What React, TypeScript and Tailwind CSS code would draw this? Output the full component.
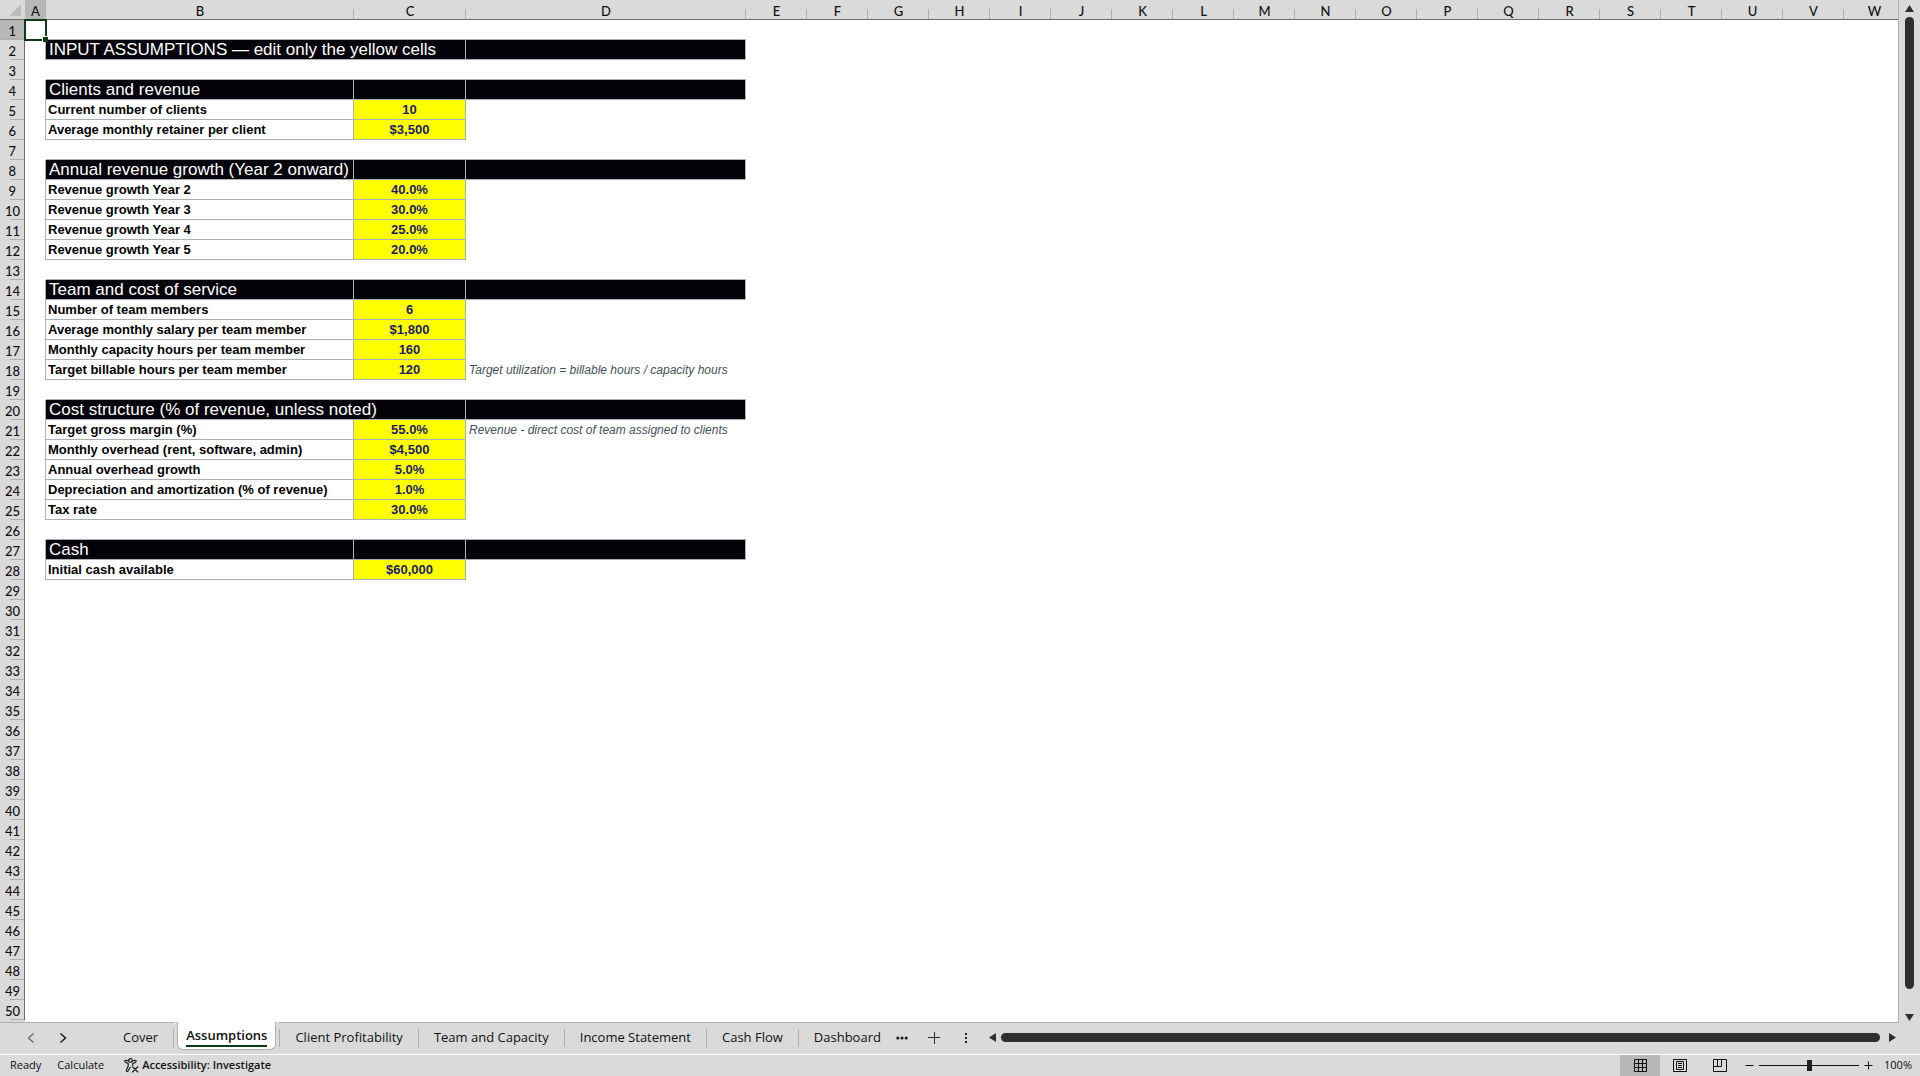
import type { ReactNode } from "react";

type Row = {
  kind: "title" | "input";
  label: string;
  value?: string;
  note?: string;
  // long titles run over the empty cell on their right
  spill?: boolean;
};

const SHEET: Record<number, Row> = {
  2: { kind: "title", label: "INPUT ASSUMPTIONS — edit only the yellow cells", spill: true },
  4: { kind: "title", label: "Clients and revenue" },
  5: { kind: "input", label: "Current number of clients", value: "10" },
  6: { kind: "input", label: "Average monthly retainer per client", value: "$3,500" },
  8: { kind: "title", label: "Annual revenue growth (Year 2 onward)" },
  9: { kind: "input", label: "Revenue growth Year 2", value: "40.0%" },
  10: { kind: "input", label: "Revenue growth Year 3", value: "30.0%" },
  11: { kind: "input", label: "Revenue growth Year 4", value: "25.0%" },
  12: { kind: "input", label: "Revenue growth Year 5", value: "20.0%" },
  14: { kind: "title", label: "Team and cost of service" },
  15: { kind: "input", label: "Number of team members", value: "6" },
  16: { kind: "input", label: "Average monthly salary per team member", value: "$1,800" },
  17: { kind: "input", label: "Monthly capacity hours per team member", value: "160" },
  18: {
    kind: "input",
    label: "Target billable hours per team member",
    value: "120",
    note: "Target utilization = billable hours / capacity hours",
  },
  20: { kind: "title", label: "Cost structure (% of revenue, unless noted)", spill: true },
  21: {
    kind: "input",
    label: "Target gross margin (%)",
    value: "55.0%",
    note: "Revenue - direct cost of team assigned to clients",
  },
  22: { kind: "input", label: "Monthly overhead (rent, software, admin)", value: "$4,500" },
  23: { kind: "input", label: "Annual overhead growth", value: "5.0%" },
  24: { kind: "input", label: "Depreciation and amortization (% of revenue)", value: "1.0%" },
  25: { kind: "input", label: "Tax rate", value: "30.0%" },
  27: { kind: "title", label: "Cash" },
  28: { kind: "input", label: "Initial cash available", value: "$60,000" },
};

const ROW_COUNT = 50;
const COLUMNS = "ABCDEFGHIJKLMNOPQRSTUVW".split("");
const TABS = [
  "Cover",
  "Assumptions",
  "Client Profitability",
  "Team and Capacity",
  "Income Statement",
  "Cash Flow",
  "Dashboard",
];
const ACTIVE_TAB = "Assumptions";

function columnWidth(name: string) {
  if (name === "A") return "w-[21px]";
  if (name === "B") return "w-[308px]";
  if (name === "C") return "w-[112px]";
  if (name === "D") return "w-[280px]";
  return "w-[61px]";
}

function ColumnHeaders() {
  return (
    <thead>
      <tr className="h-5">
        <th className="border-b border-[#6b6b6b] p-0">
          <svg className="ml-[9px] h-3 w-3" viewBox="0 0 12 12" aria-hidden="true">
            <path d="M12 0V12H0Z" fill="#bcbcbc" />
          </svg>
        </th>
        {COLUMNS.map((name) => (
          <th
            key={name}
            scope="col"
            className={`relative border-b border-[#6b6b6b] px-0 pt-[2px] pb-0 font-[Lato,sans-serif] text-[13px] leading-4 font-medium after:absolute after:right-0 after:bottom-0 after:w-px after:bg-[#b0b0b0] ${
              name === "A" ? "bg-[#b7b7b7] after:h-5" : "after:h-[10px]"
            }`}
          >
            {name}
          </th>
        ))}
      </tr>
    </thead>
  );
}

function SheetRow({ index }: { index: number }) {
  const row = SHEET[index];
  const next = SHEET[index + 1];
  const line = "border-[#a9b0b4]";

  let cells: ReactNode;
  if (row?.kind === "title") {
    const bar = `border-r border-b ${line} bg-[#030208]`;
    cells = (
      <>
        <td className={`border-r ${line} p-0`} />
        <td
          colSpan={row.spill ? 2 : 1}
          className={`${bar} py-0 pr-0 pl-[3px] text-[17px] leading-[18px] whitespace-nowrap text-white`}
        >
          {row.label}
        </td>
        {row.spill ? null : <td className={`${bar} p-0`} />}
        <td className={`${bar} p-0`} />
      </>
    );
  } else if (row) {
    cells = (
      <>
        <td className={`border-r ${line} p-0`} />
        <td
          className={`border-r border-b ${line} py-0 pr-0 pl-[2px] text-[13px] leading-[18px] font-bold whitespace-nowrap text-black`}
        >
          {row.label}
        </td>
        <td
          className={`border-r border-b ${line} bg-[#ffff00] px-0 pt-px pb-0 text-center text-[13px] leading-[18px] font-bold text-[#1c1c6c]`}
        >
          {row.value}
        </td>
        <td className="py-0 pr-0 pl-[3px] text-xs leading-[18px] whitespace-nowrap text-[#44505a] italic">
          {row.note}
        </td>
      </>
    );
  } else {
    const edge = next?.kind === "title" ? `border-b ${line}` : "";
    cells = (
      <>
        <td className="relative p-0">
          {index === 1 ? (
            <span className="absolute -inset-px z-10 border-2 border-[#0e3a17]">
              <span className="absolute -right-[3px] -bottom-[3px] h-[6px] w-[6px] border-t border-l border-white bg-[#0e3a17]" />
            </span>
          ) : null}
        </td>
        <td className={`${edge} p-0`} />
        <td className={`${edge} p-0`} />
        <td className={`${edge} p-0`} />
      </>
    );
  }

  return (
    <tr className="h-5">
      <th
        scope="row"
        className={`relative border-r border-[#6b6b6b] pt-[2px] pb-0 pl-0 text-right font-[Lato,sans-serif] text-[13px] leading-[18px] font-medium after:absolute after:right-0 after:bottom-0 after:h-px after:bg-[#b0b0b0] ${
          index === 1 ? "bg-[#b7b7b7] after:w-full" : "bg-[#dadada] after:w-[14px]"
        } ${index < 10 ? "pr-2" : "pr-1"}`}
      >
        {index}
      </th>
      {cells}
      <td colSpan={19} className="p-0" />
    </tr>
  );
}

function Triangle({ d, label }: { d: string; label: string }) {
  return (
    <button type="button" aria-label={label} className="shrink-0">
      <svg className="h-[9px] w-[9px]" viewBox="0 0 9 9">
        <path d={d} fill="#2f2f2f" />
      </svg>
    </button>
  );
}

function SheetTabs() {
  return (
    <div className="flex h-8 shrink-0 items-start">
      <div className="flex h-8 w-[108px] shrink-0 items-center gap-5 border-t border-[#b0b0b0] pb-[2px] pl-[25px]">
        <button type="button" aria-label="Previous sheet">
          <svg className="h-3 w-3" viewBox="0 0 12 12" fill="none" stroke="#6a6a6a" strokeWidth="1.3">
            <path d="M8.5 1.5L3.5 6L8.5 10.5" />
          </svg>
        </button>
        <button type="button" aria-label="Next sheet">
          <svg className="h-3 w-3" viewBox="0 0 12 12" fill="none" stroke="#1f1f1f" strokeWidth="1.5">
            <path d="M3.5 1.5L8.5 6L3.5 10.5" />
          </svg>
        </button>
      </div>
      <nav className="flex text-[13px] whitespace-nowrap">
        {TABS.map((tab) =>
          tab === ACTIVE_TAB ? (
            <div key={tab} className="flex h-8 px-[3px]">
              <button
                type="button"
                className="h-7 rounded-b-md border-x border-b border-[#b0b0b0] bg-white px-2 pb-[2px] font-semibold"
              >
                <span className="block border-b-2 border-[#0e3a17] pt-[2px] leading-5">{tab}</span>
              </button>
            </div>
          ) : (
            <div key={tab} className="flex h-8 items-center border-t border-[#b0b0b0] pb-[2px]">
              {tab === "Client Profitability" ? <span className="h-[18px] w-px bg-[#b0b0b0]" /> : null}
              <button type="button" className="px-[15px]">
                {tab}
              </button>
              {tab === "Dashboard" ? null : <span className="h-[18px] w-px bg-[#b0b0b0]" />}
            </div>
          ),
        )}
      </nav>
      <div className="flex h-8 min-w-0 grow items-center border-t border-[#b0b0b0] pb-[2px]">
        <button type="button" aria-label="More sheets">
          <svg className="h-3 w-3" viewBox="0 0 12 12" fill="#1f1f1f">
            <circle cx="1.8" cy="6" r="1.6" />
            <circle cx="6" cy="6" r="1.6" />
            <circle cx="10.2" cy="6" r="1.6" />
          </svg>
        </button>
        <button type="button" aria-label="New sheet" className="ml-5">
          <svg className="h-3 w-3" viewBox="0 0 12 12" stroke="#2b2b2b" strokeWidth="1">
            <path d="M6.5 0V12M0 5.5H12" />
          </svg>
        </button>
        <span className="ml-5 flex w-3 flex-col items-center gap-[2px]">
          <i className="h-[2px] w-[2px] bg-[#1f1f1f]" />
          <i className="h-[2px] w-[2px] bg-[#1f1f1f]" />
          <i className="h-[2px] w-[2px] bg-[#1f1f1f]" />
        </span>
        <div className="ml-4 flex grow items-center gap-1">
          <Triangle label="Scroll left" d="M8 0V9L1 4.500Z" />
          <div className="h-[9px] grow rounded-full bg-[#2f2f2f]" />
        </div>
      </div>
      <div className="flex h-8 w-[40px] shrink-0">
        <span className="flex w-[19px] items-center border-t border-[#b0b0b0] pb-[2px] pl-2">
          <Triangle label="Scroll right" d="M1 0V9L8 4.500Z" />
        </span>
      </div>
    </div>
  );
}

function StatusBar() {
  return (
    <footer className="flex h-[22px] shrink-0 items-center border-t border-white text-[11px]">
      <span className="ml-[10px]">Ready</span>
      <span className="ml-4">Calculate</span>
      <button type="button" className="ml-5 flex items-center gap-[3px] font-semibold">
        <svg
          className="h-[15px] w-[15px]"
          viewBox="0 0 15 15"
          fill="none"
          stroke="#1f1f1f"
          strokeWidth="1.2"
          strokeLinecap="round"
          strokeLinejoin="round"
        >
          <circle cx="6.500" cy="2.500" r="1.800" />
          <path d="M4.700 3.200L2.200 2.300Q.8 2.200 .8 3.400Q.9 4.200 4.200 5.600V8L2.300 12.300Q2.200 13.900 3.700 13.500L6.300 9.300M8.300 3.200L10.800 2.300Q12.200 2.200 12.200 3.400Q12.100 4.200 8.800 5.600V7.300M8.500 8.800L13.800 14M13.800 8.800L8.500 14" />
        </svg>
        Accessibility: Investigate
      </button>
      <div className="ml-auto flex h-full items-center">
        <button type="button" aria-label="Normal view" className="flex h-full w-10 items-center justify-center bg-[#b7b7b7]">
          <svg className="h-[13px] w-[13px]" viewBox="0 0 13 13" fill="none" stroke="#111">
            <path d="M.5.5H12.500V12.500H.5ZM4.500.5V12.500M8.500.5V12.500M.5 4.500H12.500M.5 8.500H12.500" />
          </svg>
        </button>
        <button type="button" aria-label="Page layout" className="flex h-full w-10 items-center justify-center">
          <svg className="h-[13px] w-[14px]" viewBox="0 0 14 13" fill="none" stroke="#111">
            <path d="M.5.5H13.500V12.500H.5ZM3.500 2.500H10.500V10.500H3.500ZM5 4.500H9M5 6.500H9M5 8.500H9" />
          </svg>
        </button>
        <button type="button" aria-label="Page break preview" className="flex h-full w-10 items-center justify-center">
          <svg className="h-[13px] w-[14px]" viewBox="0 0 14 13" fill="none" stroke="#111">
            <path d="M.5.5H13.500V12.500H.5ZM4.500.5V7.500M8.500.5V7.500M.5 7.500H8.500" />
          </svg>
        </button>
        <button type="button" aria-label="Zoom out" className="ml-[5px]">
          <svg className="h-[9px] w-[9px]" viewBox="0 0 9 9" stroke="#111">
            <path d="M.5 4.500H8.500" />
          </svg>
        </button>
        <input
          type="range"
          aria-label="Zoom"
          min={0}
          max={100}
          defaultValue={50}
          className="mx-[5px] h-[11px] w-[100px] appearance-none bg-transparent [&::-webkit-slider-runnable-track]:h-px [&::-webkit-slider-runnable-track]:bg-[#111] [&::-webkit-slider-thumb]:-mt-[5px] [&::-webkit-slider-thumb]:h-[11px] [&::-webkit-slider-thumb]:w-[5px] [&::-webkit-slider-thumb]:appearance-none [&::-webkit-slider-thumb]:bg-[#1f1f28]"
        />
        <button type="button" aria-label="Zoom in">
          <svg className="h-[9px] w-[9px]" viewBox="0 0 9 9" stroke="#111">
            <path d="M.5 4.500H8.500M4.500.5V8.500" />
          </svg>
        </button>
        <span className="w-[47px] pr-2 text-right">100%</span>
      </div>
    </footer>
  );
}

export default function App() {
  return (
    <div className="flex h-screen flex-col overflow-hidden bg-[#dadada] font-['Open_Sans',sans-serif] text-[#111]">
      <div className="flex min-h-0 grow">
        <main className="min-w-0 grow overflow-hidden border-r border-[#b0b0b0]">
          <table className="w-[1905px] table-fixed border-separate border-spacing-0">
            <colgroup>
              <col className="w-[25px]" />
              {COLUMNS.map((name) => (
                <col key={name} className={columnWidth(name)} />
              ))}
            </colgroup>
            <ColumnHeaders />
            <tbody className="bg-white font-['Liberation_Sans',Arial,sans-serif]">
              {Array.from({ length: ROW_COUNT }, (_, i) => (
                <SheetRow key={i + 1} index={i + 1} />
              ))}
            </tbody>
          </table>
          <div className="ml-[25px] h-full bg-white" />
        </main>
        <div className="flex w-[21px] shrink-0 flex-col items-center pt-1">
          <Triangle label="Scroll up" d="M0 8H9L4.500 1Z" />
          <div className="mt-1 mb-6 w-[9px] grow rounded-full bg-[#2f2f2f]" />
          <Triangle label="Scroll down" d="M0 1H9L4.500 8Z" />
        </div>
      </div>
      <SheetTabs />
      <StatusBar />
    </div>
  );
}
